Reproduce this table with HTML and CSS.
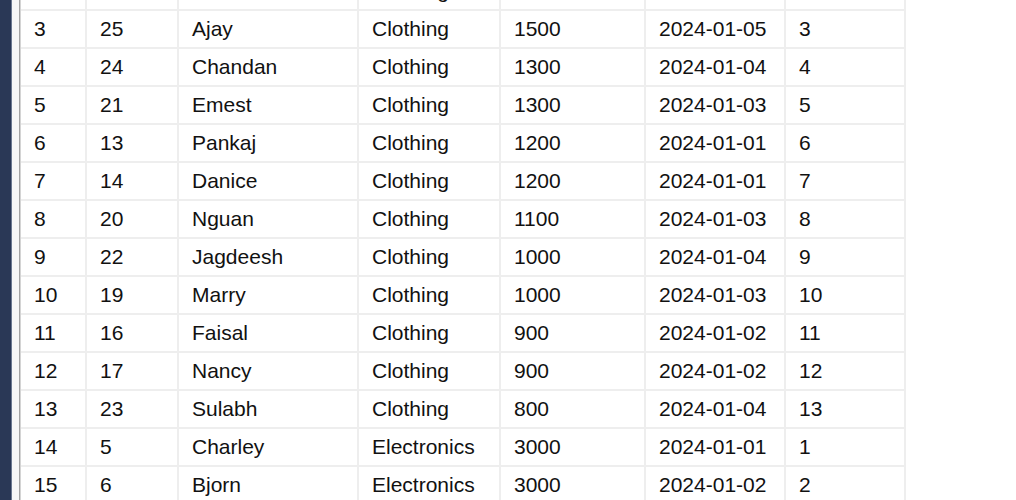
FILE: index.html
```html
<!DOCTYPE html>
<html>
<head>
<meta charset="utf-8">
<link rel="stylesheet" href="styles.css">
</head>
<body>
<div class="frame">
  <div class="side"></div>
  <div class="side-edge"></div>
  <div class="gutter"></div>
  <div class="grid-border"></div>
  <div class="results">
    <table class="grid">
      <colgroup>
        <col class="c1"><col class="c2"><col class="c3"><col class="c4"><col class="c5"><col class="c6"><col class="c7">
      </colgroup>
      <tbody>
        <tr><td>2</td><td>18</td><td>Rohit</td><td>Clothing</td><td>1800</td><td>2024-01-02</td><td>2</td></tr>
        <tr><td>3</td><td>25</td><td>Ajay</td><td>Clothing</td><td>1500</td><td>2024-01-05</td><td>3</td></tr>
        <tr><td>4</td><td>24</td><td>Chandan</td><td>Clothing</td><td>1300</td><td>2024-01-04</td><td>4</td></tr>
        <tr><td>5</td><td>21</td><td>Emest</td><td>Clothing</td><td>1300</td><td>2024-01-03</td><td>5</td></tr>
        <tr><td>6</td><td>13</td><td>Pankaj</td><td>Clothing</td><td>1200</td><td>2024-01-01</td><td>6</td></tr>
        <tr><td>7</td><td>14</td><td>Danice</td><td>Clothing</td><td>1200</td><td>2024-01-01</td><td>7</td></tr>
        <tr><td>8</td><td>20</td><td>Nguan</td><td>Clothing</td><td>1100</td><td>2024-01-03</td><td>8</td></tr>
        <tr><td>9</td><td>22</td><td>Jagdeesh</td><td>Clothing</td><td>1000</td><td>2024-01-04</td><td>9</td></tr>
        <tr><td>10</td><td>19</td><td>Marry</td><td>Clothing</td><td>1000</td><td>2024-01-03</td><td>10</td></tr>
        <tr><td>11</td><td>16</td><td>Faisal</td><td>Clothing</td><td>900</td><td>2024-01-02</td><td>11</td></tr>
        <tr><td>12</td><td>17</td><td>Nancy</td><td>Clothing</td><td>900</td><td>2024-01-02</td><td>12</td></tr>
        <tr><td>13</td><td>23</td><td>Sulabh</td><td>Clothing</td><td>800</td><td>2024-01-04</td><td>13</td></tr>
        <tr><td>14</td><td>5</td><td>Charley</td><td>Electronics</td><td>3000</td><td>2024-01-01</td><td>1</td></tr>
        <tr><td>15</td><td>6</td><td>Bjorn</td><td>Electronics</td><td>3000</td><td>2024-01-02</td><td>2</td></tr>
      </tbody>
    </table>
  </div>
</div>
</body>
</html>
```

FILE: styles.css
```css
html, body {
  margin: 0;
  padding: 0;
  background: #ffffff;
  overflow: hidden;
}

.frame {
  display: flex;
  height: 500px;
  width: 1016px;
  overflow: hidden;
}

.side {
  width: 11px;
  flex: none;
  background: #2a3856;
}

.side-edge {
  width: 1px;
  flex: none;
  background: #6b7890;
}

.gutter {
  width: 7px;
  flex: none;
  background: #f7f7f7;
}

.grid-border {
  width: 2px;
  flex: none;
  background: linear-gradient(to right, #a3a3a3 50%, #d4d4d4 50%);
}

.results {
  flex: 1;
  background: #ffffff;
  overflow: hidden;
}

.grid {
  border-collapse: separate;
  border-spacing: 0;
  table-layout: fixed;
  width: 885px;
  margin-top: -27px;
  font-family: "Liberation Sans", Arial, sans-serif;
  font-size: 21px;
  color: #111111;
}

.c1 { width: 66px; }
.c2 { width: 92px; }
.c3 { width: 180px; }
.c4 { width: 142px; }
.c5 { width: 145px; }
.c6 { width: 140px; }
.c7 { width: 120px; }

.grid td {
  height: 36px;
  line-height: 36px;
  padding: 0 0 0 13px;
  border-right: 2px solid #eeeeee;
  border-bottom: 2px solid #eeeeee;
  white-space: nowrap;
  overflow: hidden;
  box-sizing: content-box;
}
```
